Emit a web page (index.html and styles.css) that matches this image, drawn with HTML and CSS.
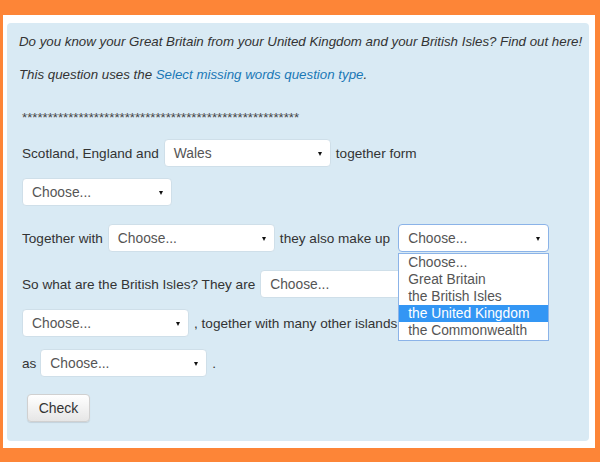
FILE: index.html
```html
<!DOCTYPE html>
<html>
<head>
<meta charset="utf-8">
<link rel="stylesheet" href="styles.css">
</head>
<body>
<div class="frame">
  <div class="panel">
    <p class="info">Do you know your Great Britain from your United Kingdom and your British Isles? Find out here!</p>
    <p class="info">This question uses the <a class="link">Select missing words question type</a>.</p>
    <div class="answer">
      <div class="stars">******************************************************</div>
      <div class="para">
        <div class="row">
          <span>Scotland, England and</span>
          <span class="sel w167">Wales<i class="arrow"></i></span>
          <span>together form</span>
        </div>
        <div class="row">
          <span class="sel w149">Choose...<i class="arrow"></i></span>
        </div>
      </div>
      <div class="para">
        <div class="row">
          <span>Together with</span>
          <span class="sel w167">Choose...<i class="arrow"></i></span>
          <span>they also make up</span>
          <span class="open-wrap">
            <span class="sel focus w151">Choose...<i class="arrow"></i></span>
            <span class="dropdown">
              <span class="opt">Choose...</span>
              <span class="opt">Great Britain</span>
              <span class="opt">the British Isles</span>
              <span class="opt active">the United Kingdom</span>
              <span class="opt">the Commonwealth</span>
            </span>
          </span>
        </div>
      </div>
      <div class="para">
        <div class="row">
          <span>So what are the British Isles? They are</span>
          <span class="sel w167">Choose...<i class="arrow"></i></span>
        </div>
        <div class="row">
          <span class="sel w167">Choose...<i class="arrow"></i></span>
          <span>, together with many other islands</span>
        </div>
        <div class="row last">
          <span class="as">as</span>
          <span class="sel w167">Choose...<i class="arrow"></i></span>
          <span>.</span>
        </div>
      </div>
      <button class="check">Check</button>
    </div>
  </div>
</div>
</body>
</html>
```
FILE: styles.css
```css
html, body {
  margin: 0;
  padding: 0;
}
body {
  background: #fd8537;
  width: 600px;
  height: 462px;
  overflow: hidden;
  font-family: "Liberation Sans", Arial, sans-serif;
  color: #333;
}
.frame {
  background: #fff;
  margin: 15px 5px 0 3px;
  height: 433px;
  padding: 8px 6px 0 4px;
  box-sizing: border-box;
}
.panel {
  background: #d9eaf4;
  border-radius: 4px;
  height: 418px;
  padding: 10px 0 0 12px;
  box-sizing: border-box;
}
.info {
  margin: 0 0 15px 0;
  font-size: 13.3px;
  font-style: italic;
  line-height: 18px;
}
.link {
  color: #1a78b6;
  text-decoration: none;
}
.answer {
  padding-left: 3px;
}
.stars {
  font-size: 13.2px;
  line-height: 12px;
  height: 12px;
  margin-top: 28px;
  color: #444;
  overflow: visible;
}
.para {
  margin-top: 18px;
}
.stars + .para {
  margin-top: 15px;
}
.row {
  display: flex;
  align-items: center;
  height: 28px;
  font-size: 13.6px;
  margin-bottom: 11px;
}
.para .row:last-child {
  margin-bottom: 0;
}
.row.last {
  margin-top: 12px;
}
.row > * {
  margin-right: 5px;
}
.row > .as {
  margin-right: 4px;
}
.sel {
  position: relative;
  display: flex;
  align-items: center;
  box-sizing: border-box;
  height: 28px;
  background: #fff;
  border: 1px solid #cfdfe9;
  border-radius: 4px;
  padding-left: 9px;
  color: #555;
  font-size: 13.8px;
}
.w167 { width: 167px; }
.w149 { width: 150px; }
.w151 { width: 151px; }
.arrow {
  position: absolute;
  right: 8px;
  top: 12px;
  width: 0;
  height: 0;
  border-left: 2.5px solid transparent;
  border-right: 2.5px solid transparent;
  border-top: 4px solid #111;
}
.open-wrap {
  position: relative;
  margin-left: 3px;
}
.sel.focus {
  border-color: #8bb3e8;
}
.dropdown {
  position: absolute;
  left: 0;
  top: 29px;
  width: 151px;
  box-sizing: border-box;
  background: #fff;
  border: 1px solid #8bb3e8;
  display: flex;
  flex-direction: column;
  padding: 0 0 1px 0;
  z-index: 5;
}
.opt {
  display: block;
  font-size: 13.8px;
  line-height: 17px;
  padding-left: 9px;
  color: #555;
}
.opt.active {
  background: #3396f4;
  color: #fff;
}
.check {
  margin: 17px 0 0 5px;
  width: 63px;
  height: 28px;
  font-family: "Liberation Sans", Arial, sans-serif;
  font-size: 14px;
  color: #333;
  background: linear-gradient(#ffffff, #e6e6e6);
  border: 1px solid #d0d0d0;
  border-radius: 4px;
  box-shadow: 0 1px 1px rgba(0,0,0,0.1);
  padding: 0;
}
```
